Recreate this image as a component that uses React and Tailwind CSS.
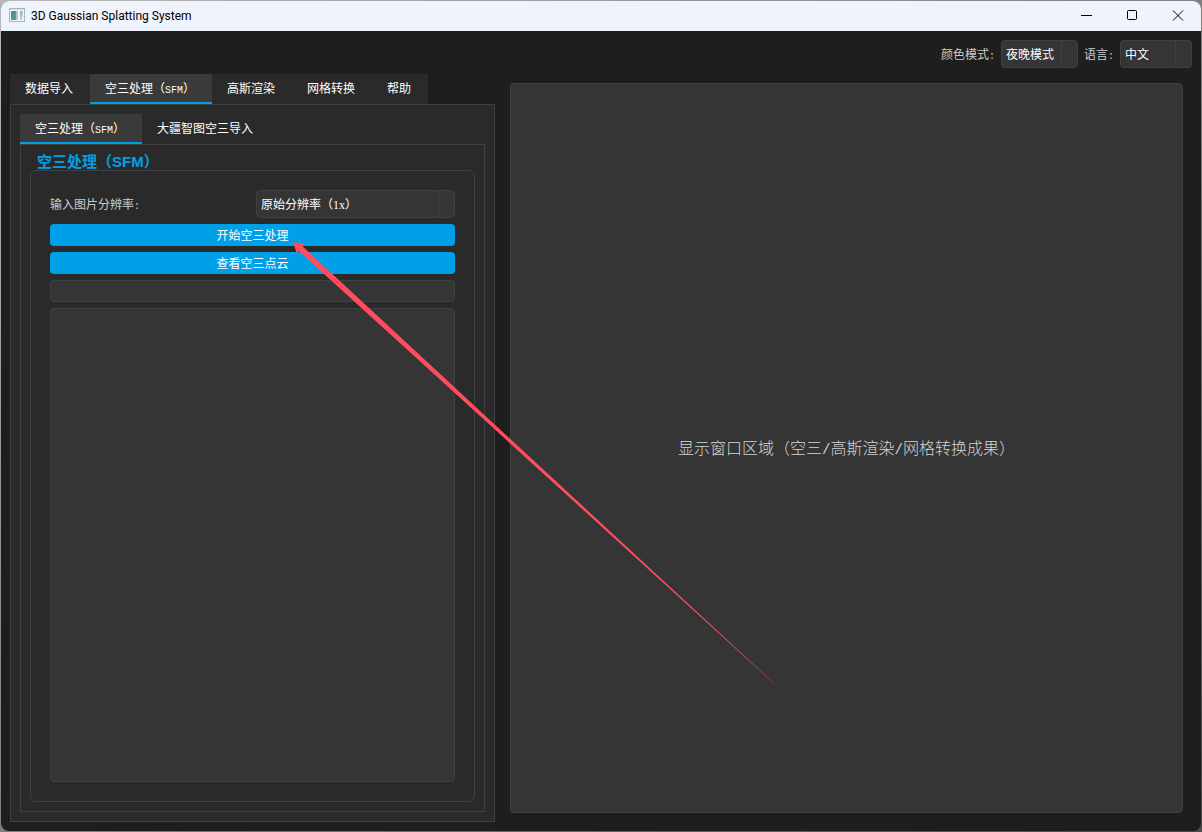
import { useState } from 'react'

const MAIN_TABS = [
  { id: 'import', label: '数据导入' },
  { id: 'sfm', label: '空三处理', suffix: 'SFM' },
  { id: 'gs', label: '高斯渲染' },
  { id: 'mesh', label: '网格转换' },
  { id: 'help', label: '帮助' },
]

const SFM_TABS = [
  { id: 'sfm', label: '空三处理', suffix: 'SFM' },
  { id: 'terra', label: '大疆智图空三导入' },
]

// Half-width latin glyphs: one cell is half of a CJK cell.
function Half({ children }) {
  return <span className="font-['Liberation_Mono',monospace] text-[10px]">{children}</span>
}

function TabBar({ tabs, active, onChange, label }) {
  return (
    <div role="tablist" aria-label={label} className="flex shrink-0">
      {tabs.map((t) => (
        <button
          key={t.id}
          role="tab"
          aria-selected={t.id === active}
          onClick={() => onChange(t.id)}
          className={
            t.id === active
              ? 'h-[30px] border-b-2 border-[#00a0e9] bg-[#3a3a3a] pt-[2px] pr-[17px] pl-[15px] whitespace-nowrap'
              : 'h-[30px] border-b-2 border-[#2a2a2a] bg-[#2a2a2a] pt-[2px] pr-[17px] pl-[15px] whitespace-nowrap'
          }
        >
          {t.label}
          {t.suffix && (
            <>
              （<Half>{t.suffix}</Half>）
            </>
          )}
        </button>
      ))}
    </div>
  )
}

// Native select with a divider where the drop-down button sits.
function Combo({ id, options, className }) {
  return (
    <div className={`relative h-7 ${className}`}>
      <select
        id={id}
        className="h-full w-full appearance-none rounded border border-[#404040] bg-[#353535] pt-[2px] pr-4 pl-1 text-white outline-none"
      >
        {options.map((o) => (
          <option key={o}>{o}</option>
        ))}
      </select>
      <span className="pointer-events-none absolute inset-y-px right-4 w-px bg-[#404040]" />
    </div>
  )
}

function FieldLabel({ htmlFor, children }) {
  return (
    <label htmlFor={htmlFor} className="pt-[2px] whitespace-nowrap text-[#cccccc]">
      {children}
      <Half>:</Half>
    </label>
  )
}

function AppIcon() {
  return (
    <svg width="16" height="16" viewBox="0 0 16 16" aria-hidden="true">
      <defs>
        <linearGradient id="icon-pane" x1="0" y1="0" x2="1" y2="1">
          <stop offset="0" stopColor="#4c7fa6" />
          <stop offset="1" stopColor="#4fae7c" />
        </linearGradient>
        <linearGradient id="icon-side" x1="0" y1="0" x2="1" y2="1">
          <stop offset="0" stopColor="#6fae98" />
          <stop offset="1" stopColor="#eef2f6" />
        </linearGradient>
      </defs>
      <rect x="0.5" y="0.5" width="15" height="13" fill="#f4f5f6" stroke="#b0b4b8" />
      <rect x="1" y="1" width="14" height="1" fill="#d5d9dd" />
      <rect x="2" y="3" width="5" height="9" fill="url(#icon-pane)" />
      <rect x="7" y="3" width="2" height="9" fill="#a9cbd0" />
      <rect x="11" y="3" width="3" height="9" fill="url(#icon-side)" />
    </svg>
  )
}

function TitleBar() {
  return (
    <header className="flex h-[30px] shrink-0 items-center bg-[#eff3fb] pl-2 text-black">
      <AppIcon />
      <h1 className="ml-[6px] flex-1 font-['Roboto',sans-serif] text-xs">3D Gaussian Splatting System</h1>
      <button aria-label="最小化" className="flex h-full w-[46px] items-center justify-center">
        <svg width="12" height="12" viewBox="0 0 12 12" stroke="currentColor">
          <path d="M1 5.5h11" />
        </svg>
      </button>
      <button aria-label="最大化" className="flex h-full w-[46px] items-center justify-center">
        <svg width="12" height="12" viewBox="0 0 12 12" fill="none" stroke="currentColor">
          <rect x="1.5" y="0.5" width="9" height="9" rx="1" />
        </svg>
      </button>
      <button aria-label="关闭" className="flex h-full w-[46px] items-center justify-center">
        <svg width="12" height="12" viewBox="0 0 12 12" stroke="currentColor">
          <path d="M1 0.500l10 10M11 0.500L1 10.500" />
        </svg>
      </button>
    </header>
  )
}

function SfmGroup() {
  return (
    <section className="flex flex-1 flex-col">
      <h2 className="h-4 pl-[7px] font-['Liberation_Sans','Noto_Sans_CJK_SC',sans-serif] text-[15px] leading-4 font-bold text-[#00a0e9]">
        空三处理（SFM）
      </h2>
      <div className="flex flex-1 flex-col gap-[6px] rounded-md border border-[#404040] p-[19px]">
        <div className="grid grid-cols-[200fr_199fr] items-center gap-[6px]">
          <FieldLabel htmlFor="scale">输入图片分辨率</FieldLabel>
          <Combo id="scale" options={['原始分辨率（1x）', '1/2 分辨率', '1/4 分辨率']} className="w-full" />
        </div>
        <button className="h-[22px] rounded bg-[#00a0e9] pt-[2px]">开始空三处理</button>
        <button className="h-[22px] rounded bg-[#00a0e9] pt-[2px]">查看空三点云</button>
        <progress
          aria-label="进度"
          value="0"
          max="100"
          className="h-[22px] w-full appearance-none rounded border border-[#404040] bg-[#353535] [&::-webkit-progress-bar]:bg-transparent"
        />
        <textarea
          aria-label="日志"
          readOnly
          className="flex-1 resize-none rounded border border-[#404040] bg-[#353535] p-1 outline-none"
        />
      </div>
    </section>
  )
}

// Pointer from the viewport to the start button, tapering towards its tail.
function PointerArrow() {
  return (
    <svg
      className="pointer-events-none absolute top-[242px] left-[293px]"
      width="494"
      height="454"
      viewBox="0 0 494 454"
      fill="#ff4d5e"
      aria-hidden="true"
    >
      <path d="M0 0L11.500 1.800L9.800 4.600L493 452.500L5.800 9L3.800 11.500Z" />
    </svg>
  )
}

export default function App() {
  const [mainTab, setMainTab] = useState('sfm')
  const [subTab, setSubTab] = useState('sfm')

  return (
    <div className="relative h-screen bg-linear-to-br from-[#b8b8b8] to-[#4a4a4a] p-px font-['Liberation_Serif','Noto_Sans_CJK_SC',sans-serif] text-xs text-white">
      <div className="flex h-full flex-col overflow-hidden rounded-lg bg-[#1e1e1e]">
        <TitleBar />
        <div className="flex min-h-0 flex-1 flex-col gap-[6px] p-[9px]">
          <div className="flex items-center justify-end gap-[6px]">
            <FieldLabel htmlFor="theme">颜色模式</FieldLabel>
            <Combo id="theme" options={['夜晚模式', '白天模式']} className="w-[77px]" />
            <FieldLabel htmlFor="lang">语言</FieldLabel>
            <Combo id="lang" options={['中文', 'English']} className="w-[72px]" />
          </div>

          <main className="grid min-h-0 flex-1 grid-cols-[485fr_691fr] gap-[6px]">
            <div className="flex min-h-0 flex-col">
              <TabBar tabs={MAIN_TABS} active={mainTab} onChange={setMainTab} label="主菜单" />
              <div className="flex min-h-0 flex-1 flex-col border border-[#404040] bg-[#2a2a2a] p-[9px]">
                <TabBar tabs={SFM_TABS} active={subTab} onChange={setSubTab} label="空三" />
                <div className="flex min-h-0 flex-1 flex-col border border-[#404040] p-[9px]">
                  <SfmGroup />
                </div>
              </div>
            </div>

            <div className="flex p-[9px]">
              <div className="flex flex-1 items-center justify-center rounded border border-[#404040] bg-[#353535] text-base text-[#d4d4d4]">
                <p className="font-['Noto_Sans_CJK_SC',sans-serif] font-light">
                  显示窗口区域（空三
                  <span className="font-['Liberation_Mono',monospace] text-[14px]">/</span>
                  高斯渲染
                  <span className="font-['Liberation_Mono',monospace] text-[14px]">/</span>
                  网格转换成果）
                </p>
              </div>
            </div>
          </main>
        </div>
      </div>
      <PointerArrow />
    </div>
  )
}
